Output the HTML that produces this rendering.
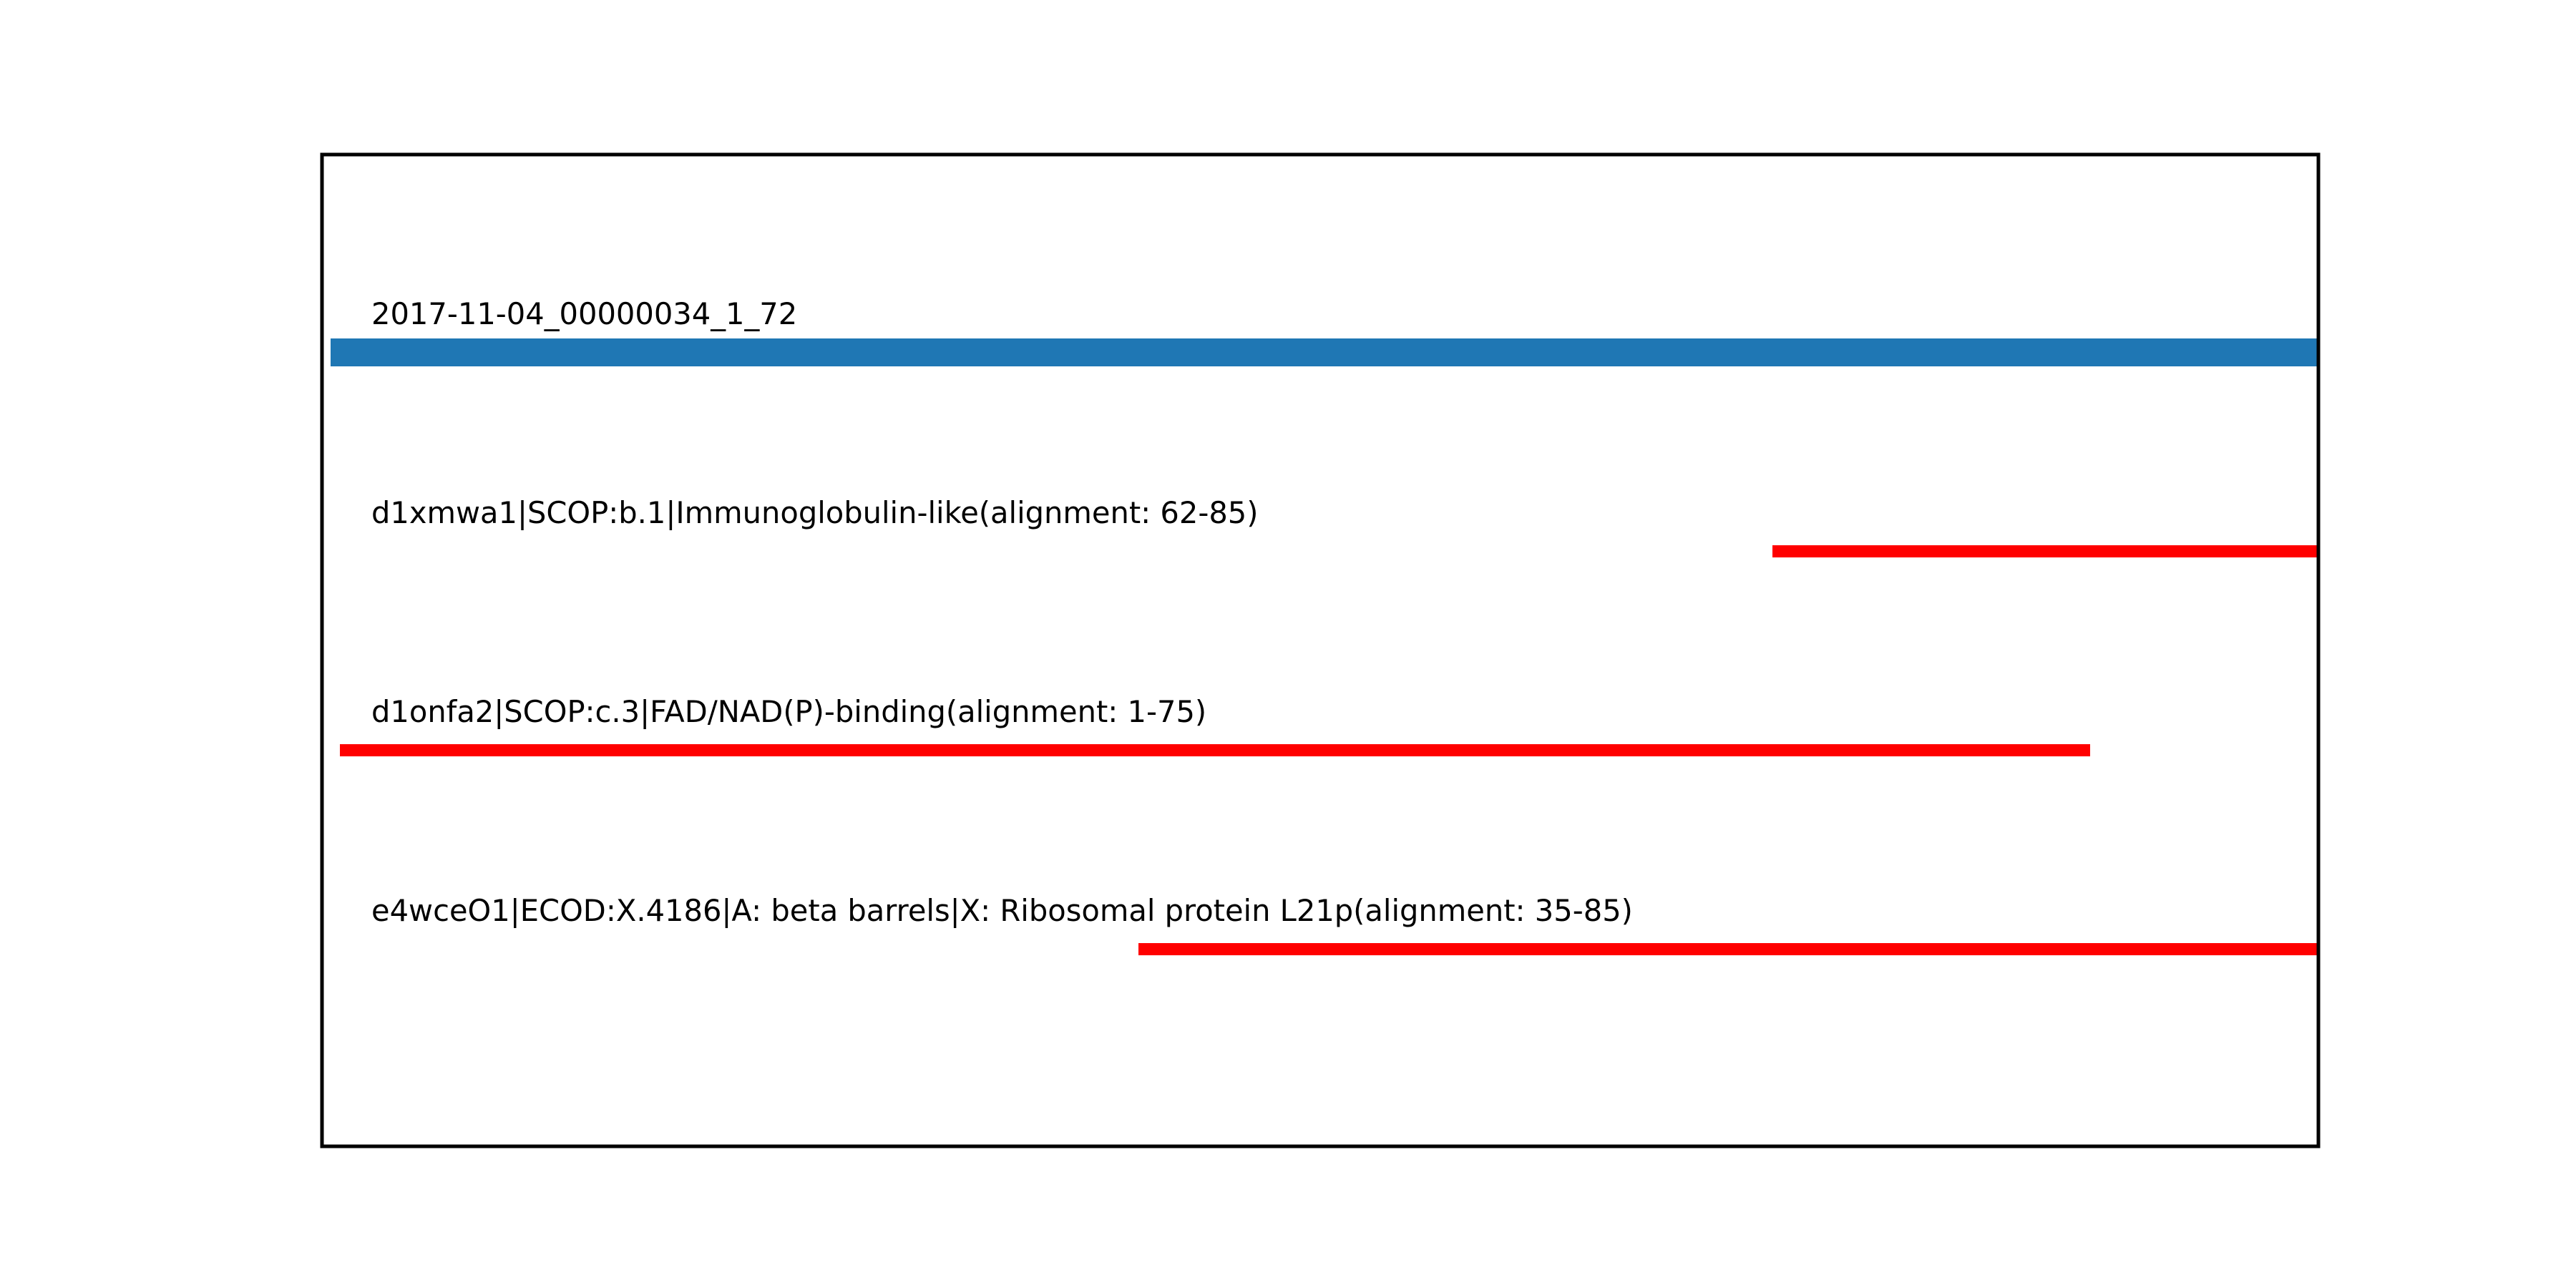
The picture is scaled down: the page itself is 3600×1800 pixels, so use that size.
<!DOCTYPE html>
<html><head><meta charset="utf-8"><style>
html,body{margin:0;padding:0;background:#fff;}
svg{display:block;}
text{font-family:"DejaVu Sans","Liberation Sans",sans-serif;font-size:41.6px;fill:#000;}
</style></head><body>
<svg width="3600" height="1800" viewBox="0 0 3600 1800" xmlns="http://www.w3.org/2000/svg">
<rect x="0" y="0" width="3600" height="1800" fill="#fff"/>
<rect x="462" y="473" width="2778" height="39" fill="#1f77b4"/>
<rect x="2477" y="762" width="763" height="17" fill="#ff0000"/>
<rect x="475" y="1040" width="2446" height="17" fill="#ff0000"/>
<rect x="1591" y="1318" width="1649" height="17" fill="#ff0000"/>
<text x="519" y="453">2017-11-04_00000034_1_72</text>
<text x="519" y="731">d1xmwa1|SCOP:b.1|Immunoglobulin-like(alignment: 62-85)</text>
<text x="519" y="1009">d1onfa2|SCOP:c.3|FAD/NAD(P)-binding(alignment: 1-75)</text>
<text x="519" y="1287">e4wceO1|ECOD:X.4186|A: beta barrels|X: Ribosomal protein L21p(alignment: 35-85)</text>
<rect x="450" y="216" width="2790" height="1386" fill="none" stroke="#000" stroke-width="5"/>
</svg>
</body></html>
